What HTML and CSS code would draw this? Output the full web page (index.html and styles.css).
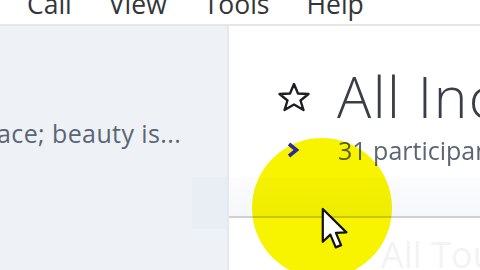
FILE: index.html
```html
<!DOCTYPE html>
<html>
<head>
<meta charset="utf-8">
<link rel="stylesheet" href="styles.css">
</head>
<body>
<div class="app">
  <div class="menubar">
    <span class="menu-item">Call</span>
    <span class="menu-item">View</span>
    <span class="menu-item">Tools</span>
    <span class="menu-item">Help</span>
  </div>
  <div class="main">
    <aside class="sidebar">
      <div class="preview">ace; beauty is...</div>
      <div class="side-tab"></div>
    </aside>
    <section class="content">
      <div class="header">
        <div class="title-row">
          <svg class="star" viewBox="0 0 34 30" width="34" height="30">
            <polygon points="17,2 21,11.5 31.5,12 23.5,18.5 26.5,28 17,22.5 7.5,28 10.5,18.5 2.5,12 13,11.5" fill="none" stroke="#1e1e22" stroke-width="2.4" stroke-linejoin="round"/>
          </svg>
          <h1 class="title">All Inclusive</h1>
        </div>
        <div class="sub-row">
          <svg class="chevron" viewBox="0 0 14 16" width="14" height="16">
            <path d="M3 2 L10.5 8 L3 14" fill="none" stroke="#2a2c9a" stroke-width="3.6" stroke-linejoin="miter"/>
          </svg>
          <span class="participants">31 participants</span>
        </div>
      </div>
      <div class="band"></div>
      <div class="below">
        <span class="ghost">All Tours</span>
      </div>
    </section>
  </div>
  <div class="highlight"></div>
  <svg class="cursor" viewBox="0 0 13 20" width="29" height="45">
    <path d="M0.8 0.8 L0.8 15.5 L4.2 12.3 L6.6 18 L9 17 L6.7 11.5 L11.4 11.3 Z" fill="#ffffff" stroke="#111" stroke-width="1" stroke-linejoin="round"/>
  </svg>
</div>
</body>
</html>
```
FILE: styles.css
```css
* { box-sizing: border-box; }
html, body { margin: 0; padding: 0; }
body {
  width: 480px;
  height: 270px;
  overflow: hidden;
  background: #ffffff;
  font-family: "Open Sans", "Noto Sans", sans-serif;
}
.app {
  position: relative;
  width: 480px;
  height: 270px;
  overflow: hidden;
  display: flex;
  flex-direction: column;
  isolation: isolate;
}
.menubar {
  height: 26px;
  flex: none;
  display: flex;
  align-items: flex-start;
  padding-left: 27px;
  gap: 37px;
  overflow: hidden;
  background: #ffffff;
  border-bottom: 2px solid #e4e6ea;
}
.menu-item {
  font-size: 26.5px;
  line-height: 36px;
  margin-top: -14px;
  color: #333639;
}
.main {
  flex: 1;
  display: flex;
  min-height: 0;
}
.sidebar {
  width: 229px;
  flex: none;
  background: #eef2f7;
  border-right: 2px solid #e6e8ec;
  display: flex;
  flex-direction: column;
  align-items: flex-end;
  overflow: hidden;
}
.preview {
  align-self: flex-start;
  margin-left: -3px;
  margin-top: 91px;
  font-size: 25px;
  line-height: 32px;
  letter-spacing: 0.4px;
  color: #5b6573;
  white-space: nowrap;
}
.side-tab {
  margin-top: 28px;
  width: 35px;
  height: 52px;
  background: #e9eef5;
}
.content {
  flex: 1;
  display: flex;
  flex-direction: column;
  overflow: hidden;
}
.header {
  height: 152px;
  flex: none;
  padding-left: 48px;
  padding-top: 44px;
}
.title-row {
  display: flex;
  align-items: center;
  gap: 26px;
  height: 52px;
  white-space: nowrap;
}
.star { flex: none; margin-top: 2px; }
.title {
  margin: 0;
  font-size: 57px;
  font-weight: 300;
  line-height: 52px;
  color: #3a3e48;
  letter-spacing: 1.5px;
}
.sub-row {
  display: flex;
  align-items: center;
  margin-top: 12px;
  padding-left: 9px;
  gap: 38px;
  white-space: nowrap;
}
.chevron {
  flex: none;
  position: relative;
  z-index: 1;
}
.participants {
  font-size: 25px;
  line-height: 32px;
  color: #5b6573;
}
.band {
  height: 40px;
  flex: none;
  background: linear-gradient(#fcfcfe, #f5f7fa);
  border-bottom: 2px solid #cdd0d7;
}
.below {
  flex: 1;
  padding-left: 152px;
  padding-top: 12px;
  white-space: nowrap;
}
.ghost {
  font-size: 36px;
  color: #f3f3f3;
}
.highlight {
  position: absolute;
  left: 252px;
  top: 138px;
  width: 140px;
  height: 140px;
  border-radius: 50%;
  background: #f8f400;
  mix-blend-mode: multiply;
}
.cursor {
  position: absolute;
  left: 321px;
  top: 207px;
  z-index: 2;
}
```
